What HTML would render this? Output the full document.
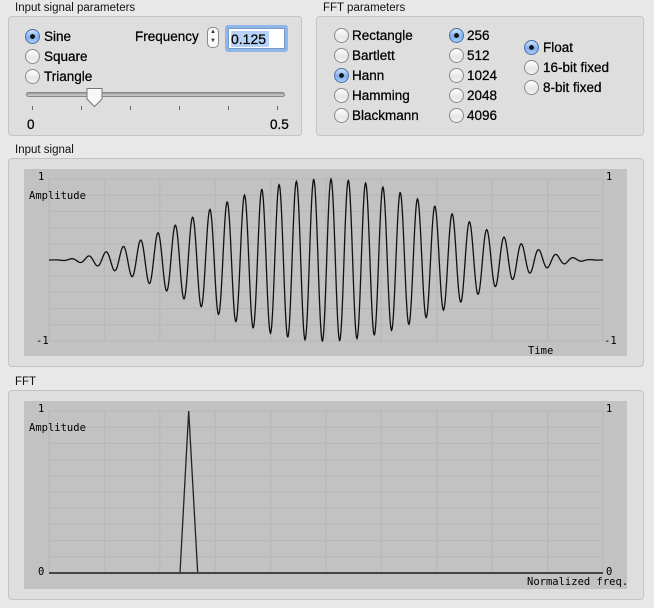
<!DOCTYPE html>
<html><head><meta charset="utf-8"><style>
*{margin:0;padding:0;box-sizing:border-box}
body{width:654px;height:608px;background:#e8e8e8;font-family:"Liberation Sans",sans-serif;position:relative;overflow:hidden;color:#000}
.t{position:absolute;font-size:11.5px;color:#111}
.box{position:absolute;background:#dedede;border:1px solid #c4c4c4;border-radius:4px}
.r{position:absolute;width:15px;height:15px;border-radius:50%;border:1px solid #8a8a8a;background:linear-gradient(#fff,#e6e6e6 60%,#f4f4f4)}
.r.on{border-color:#4a6fa8;background:radial-gradient(circle at 50% 50%,#111 0 2.2px,transparent 2.6px),linear-gradient(#cfe2fb,#7fb0ef 55%,#a9cdf7)}
.l{position:absolute;font-size:13.5px;line-height:16px;-webkit-text-stroke:0.25px #000}
.m{position:absolute;font-family:"DejaVu Sans Mono","Liberation Mono",monospace;font-size:10.5px;line-height:11px}
</style></head><body>
<div class="t" style="left:15px;top:2px">Input signal parameters</div>
<div class="box" style="left:8px;top:16px;width:294px;height:120px"></div>
<div class="t" style="left:323px;top:2px">FFT parameters</div>
<div class="box" style="left:316px;top:16px;width:328px;height:120px"></div>

<div class="r on" style="left:25px;top:29px"></div><div class="l" style="left:44px;top:29px">Sine</div>
<div class="r" style="left:25px;top:49px"></div><div class="l" style="left:44px;top:49px">Square</div>
<div class="r" style="left:25px;top:69px"></div><div class="l" style="left:44px;top:69px">Triangle</div>
<div class="l" style="left:135px;top:29px">Frequency</div>
<div style="position:absolute;left:207px;top:27px;width:12px;height:21px;border:1px solid #888;border-radius:5px;background:#fafafa;font-size:6px;text-align:center;line-height:9px;color:#333">▲<br>▼</div>
<div style="position:absolute;left:225px;top:25px;width:63px;height:27px;border-radius:3px;background:#8fb6ea"></div>
<div style="position:absolute;left:228px;top:28px;width:57px;height:21px;background:#fff;border:1px solid #7a9cc8"></div>
<div style="position:absolute;left:231px;top:31px;width:38px;height:16px;background:#b5d3f7"></div>
<div class="l" style="left:231px;top:31px;font-size:14px">0.125</div>
<div style="position:absolute;left:26px;top:92px;width:259px;height:5px;border-radius:3px;background:linear-gradient(#9a9a9a,#d0d0d0);border:1px solid #888"></div>
<svg style="position:absolute;left:85px;top:87px" width="20" height="22"><path d="M2 1.5H17V12L9.5 19.5 2 12Z" fill="#f8f8f8" stroke="#777"/></svg>
<svg style="position:absolute;left:0;top:104px" width="300" height="8"><g stroke="#666"><path d="M32.5 2v4M81.5 2v4M130.5 2v4M179.5 2v4M228.5 2v4M277.5 2v4"/></g></svg>
<div class="l" style="left:27px;top:117px">0</div><div class="l" style="left:270px;top:117px">0.5</div>

<div class="r" style="left:334px;top:28px"></div><div class="l" style="left:352px;top:28px">Rectangle</div>
<div class="r" style="left:334px;top:48px"></div><div class="l" style="left:352px;top:48px">Bartlett</div>
<div class="r on" style="left:334px;top:68px"></div><div class="l" style="left:352px;top:68px">Hann</div>
<div class="r" style="left:334px;top:88px"></div><div class="l" style="left:352px;top:88px">Hamming</div>
<div class="r" style="left:334px;top:108px"></div><div class="l" style="left:352px;top:108px">Blackmann</div>
<div class="r on" style="left:449px;top:28px"></div><div class="l" style="left:467px;top:28px">256</div>
<div class="r" style="left:449px;top:48px"></div><div class="l" style="left:467px;top:48px">512</div>
<div class="r" style="left:449px;top:68px"></div><div class="l" style="left:467px;top:68px">1024</div>
<div class="r" style="left:449px;top:88px"></div><div class="l" style="left:467px;top:88px">2048</div>
<div class="r" style="left:449px;top:108px"></div><div class="l" style="left:467px;top:108px">4096</div>
<div class="r on" style="left:524px;top:40px"></div><div class="l" style="left:543px;top:40px">Float</div>
<div class="r" style="left:524px;top:60px"></div><div class="l" style="left:543px;top:60px">16-bit fixed</div>
<div class="r" style="left:524px;top:80px"></div><div class="l" style="left:543px;top:80px">8-bit fixed</div>

<div class="t" style="left:15px;top:144px">Input signal</div>
<div class="box" style="left:8px;top:158px;width:636px;height:209px"></div>
<div class="t" style="left:15px;top:376px">FFT</div>
<div class="box" style="left:8px;top:390px;width:636px;height:210px"></div>

<svg id="s" style="position:absolute;left:0;top:0" width="654" height="608"></svg>
<div class="m" style="left:38px;top:172px">1</div><div class="m" style="left:29px;top:191px">Amplitude</div>
<div class="m" style="left:36px;top:336px">-1</div><div class="m" style="left:606px;top:172px">1</div>
<div class="m" style="left:604px;top:336px">-1</div><div class="m" style="left:528px;top:346px">Time</div>
<div class="m" style="left:38px;top:404px">1</div><div class="m" style="left:29px;top:423px">Amplitude</div>
<div class="m" style="left:38px;top:567px">0</div><div class="m" style="left:606px;top:404px">1</div>
<div class="m" style="left:606px;top:567px">0</div><div class="m" style="left:527px;top:577px">Normalized freq.</div>
<script>
var s='';
function plot(y0,y1,by0,by1){
 s+='<rect x="24" y="'+by0+'" width="603" height="'+(by1-by0)+'" fill="#c2c2c2"/>';
 for(var i=0;i<=10;i++){var x=49+i*55.4;s+='<line x1="'+x+'" x2="'+x+'" y1="'+y0+'" y2="'+y1+'" stroke="#b6b6b6"/>';
  var y=y0+i*(y1-y0)/10;s+='<line x1="49" x2="603" y1="'+y+'" y2="'+y+'" stroke="#b6b6b6"/>';}
}
plot(179,341,169,356);plot(411,573,401,589);
var p='';
for(var x=49;x<=603;x+=0.5){var t=(x-49)/554;var w=0.5-0.5*Math.cos(2*Math.PI*t);
 var y=260-81*w*Math.cos(2*Math.PI*(x-313.7)/17.31);p+=(p?'L':'M')+x.toFixed(1)+' '+y.toFixed(1);}
s+='<path d="'+p+'" fill="none" stroke="#111" stroke-width="1.3"/>';
s+='<path d="M49 573H180L188.7 411 197.7 573H603" fill="none" stroke="#222" stroke-width="1.3"/>';
s+='<line x1="49" x2="603" y1="573" y2="573" stroke="#444" stroke-width="2"/>';
document.getElementById('s').innerHTML=s;
</script>
</body></html>
